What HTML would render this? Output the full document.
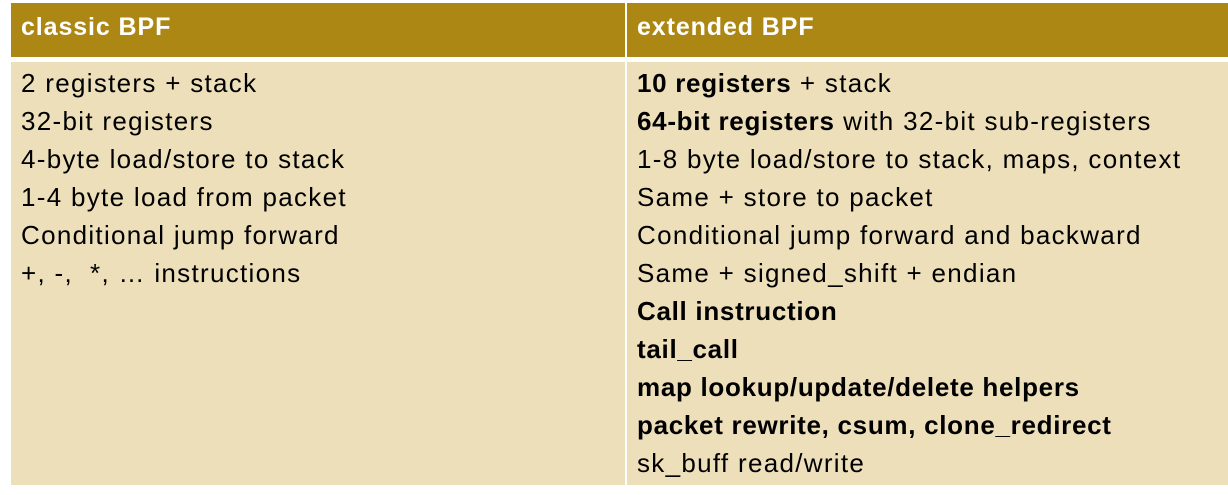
<!DOCTYPE html>
<html><head><style>
body{margin:0;width:1228px;height:495px;background:#fff;position:relative;overflow:hidden;font-family:"Liberation Sans",sans-serif;}
.h{position:absolute;top:3px;height:54px;background:#ad8714;color:#fff;font-weight:bold;font-size:25px;line-height:49px;letter-spacing:0.9px;}
.b{position:absolute;top:62px;height:423px;background:#eddfba;color:#000;font-size:26px;}
.l{left:11px;width:614px}
.r{left:627px;width:601px}
.t{padding-left:10px;}
.b .t{padding-top:2px;line-height:38px;letter-spacing:1.3px}
.b b{letter-spacing:0.7px}
</style></head><body>
<div class="h l"><div class="t">classic BPF</div></div>
<div class="h r"><div class="t">extended BPF</div></div>
<div class="b l"><div class="t">2 registers + stack<br>32-bit registers<br>4-byte load/store to stack<br>1-4 byte load from packet<br>Conditional jump forward<br>+, -,&nbsp; *, … instructions</div></div>
<div class="b r"><div class="t"><b>10 registers</b> + stack<br><b>64-bit registers</b> with 32-bit sub-registers<br>1-8 byte load/store to stack, maps, context<br>Same + store to packet<br>Conditional jump forward and backward<br>Same + signed_shift + endian<br><b>Call instruction</b><br><b>tail_call</b><br><b>map lookup/update/delete helpers</b><br><b>packet rewrite, csum, clone_redirect</b><br>sk_buff read/write</div></div>
</body></html>
